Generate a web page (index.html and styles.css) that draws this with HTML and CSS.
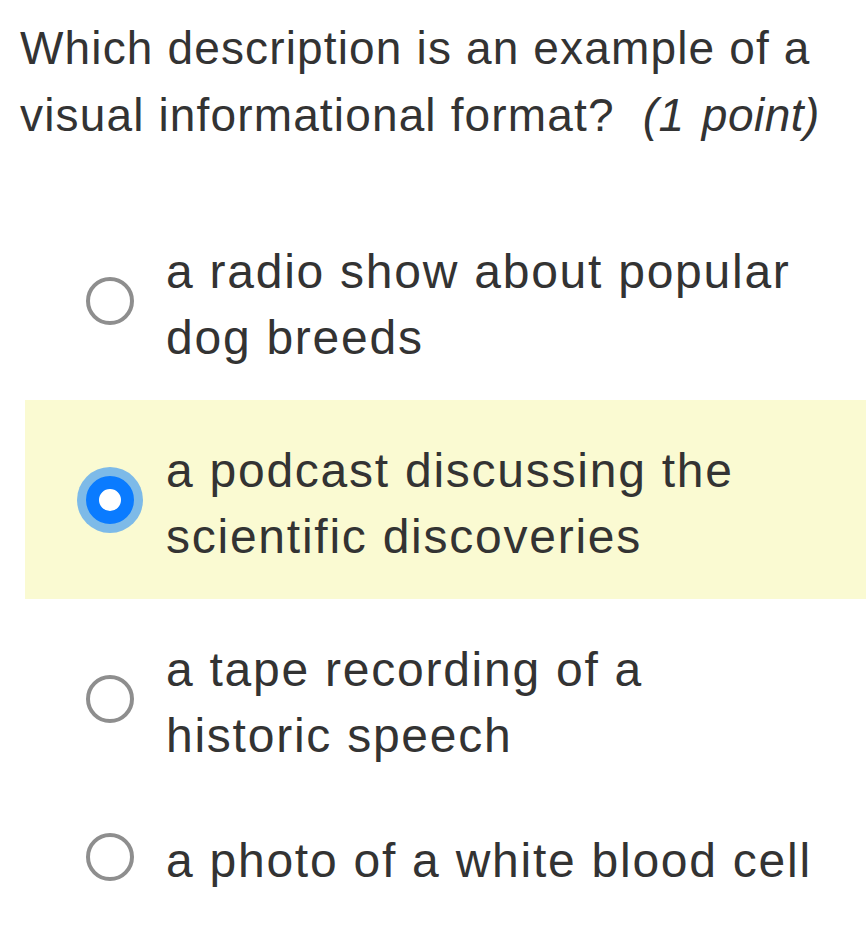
FILE: index.html
```html
<!DOCTYPE html>
<html lang="en">
<head>
<meta charset="utf-8">
<title>Question</title>
<link rel="stylesheet" href="styles.css">
</head>
<body>
<div class="page">
  <div class="question">
    <div class="q-line">Which description is an example of a</div>
    <div class="q-line"><span>visual informational format?</span><span class="points">(1 point)</span></div>
  </div>
  <div class="options">
    <div class="option">
      <span class="radio"></span>
      <span class="label">a radio show about popular<br>dog breeds</span>
    </div>
    <div class="option selected">
      <span class="radio"></span>
      <span class="label">a podcast discussing the<br>scientific discoveries</span>
    </div>
    <div class="option">
      <span class="radio"></span>
      <span class="label">a tape recording of a<br>historic speech</span>
    </div>
    <div class="option last">
      <span class="radio"></span>
      <span class="label">a photo of a white blood cell</span>
    </div>
  </div>
</div>
</body>
</html>
```
FILE: styles.css
```css
html, body {
  margin: 0;
  padding: 0;
  background: #ffffff;
}

.page {
  font-family: "Liberation Sans", Arial, sans-serif;
  color: #333333;
}

.question {
  margin: 0;
  padding: 15px 20px 0 20px;
  font-size: 46px;
  line-height: 67px;
  letter-spacing: 1.15px;
}

.q-line {
  white-space: nowrap;
}

.points {
  font-style: italic;
  margin-left: 28px;
  letter-spacing: 0.5px;
  word-spacing: 4px;
}

.options {
  margin: 52px 0 0 25px;
  display: flex;
  flex-direction: column;
}

.option {
  display: flex;
  align-items: center;
  padding: 30px 0 29px 0;
}

.option.last {
  padding-top: 22px;
}

.option.selected {
  background: #fafad2;
}

.radio {
  flex: none;
  width: 48px;
  height: 48px;
  box-sizing: border-box;
  margin-left: 61px;
  border: 4px solid #8e8e8e;
  border-radius: 50%;
  background: #ffffff;
}

.selected .radio {
  border: 13.5px solid #0a7bff;
  box-shadow: 0 0 0 9px #7dbae8;
}

.label {
  margin-left: 32px;
  padding-top: 8px;
  font-size: 48px;
  line-height: 66px;
  letter-spacing: 1.75px;
}
```
